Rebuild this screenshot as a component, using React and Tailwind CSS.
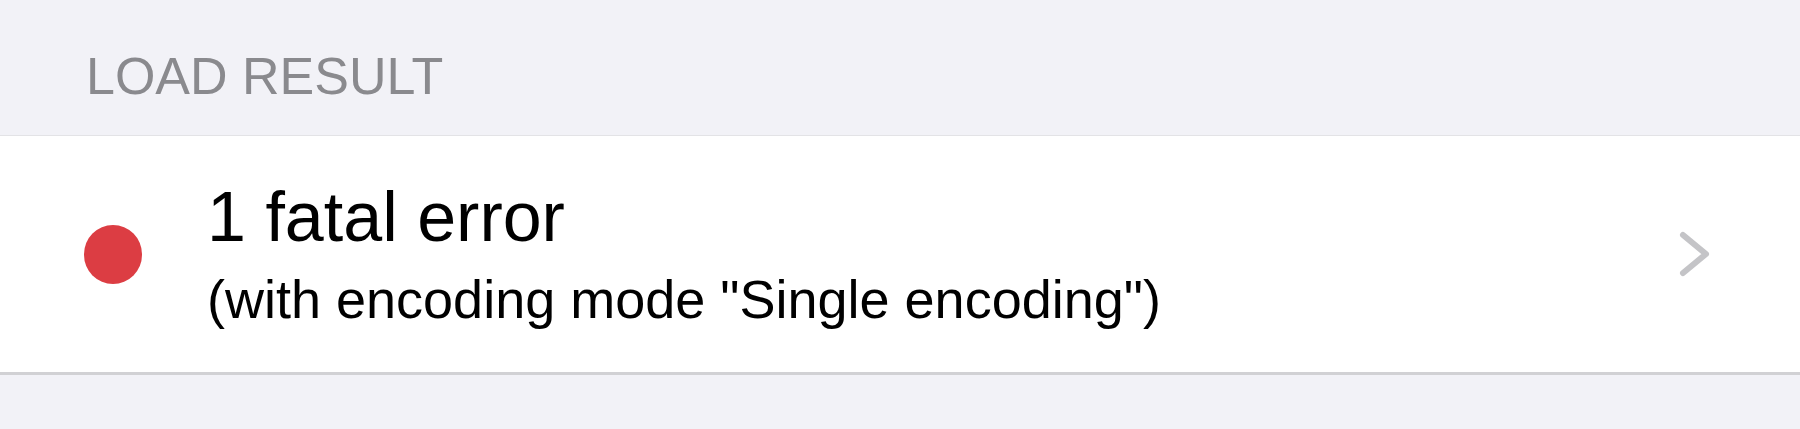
export default function App() {
  return (
    <div className="w-[1800px] h-[429px] bg-[#f2f2f7] flex flex-col" style={{ fontFamily: '"Liberation Sans", Arial, sans-serif' }}>
      <div className="h-[135px] pl-[86px] pt-[50px]">
        <div className="text-[52px] leading-none text-[#8a8a8e]">LOAD RESULT</div>
      </div>
      <div className="h-[240px] bg-white border-t border-t-[#e3e3e6] border-b-[3px] border-b-[#d1d1d4] flex items-center pl-[84px] pr-[87px]">
        <div className="w-[58px] h-[59px] rounded-full bg-[#dc3d43] shrink-0" />
        <div className="ml-[65px] flex flex-col gap-[20px] flex-1">
          <div className="text-[70px] leading-none text-black">1 fatal error</div>
          <div className="text-[54px] leading-none text-black">(with encoding mode "Single encoding")</div>
        </div>
        <svg width="36" height="48" viewBox="0 0 36 48" className="shrink-0">
          <path d="M6 5 L29 24 L6 43" fill="none" stroke="#c4c4c7" strokeWidth="6" strokeLinecap="round" strokeLinejoin="round" />
        </svg>
      </div>
    </div>
  );
}
